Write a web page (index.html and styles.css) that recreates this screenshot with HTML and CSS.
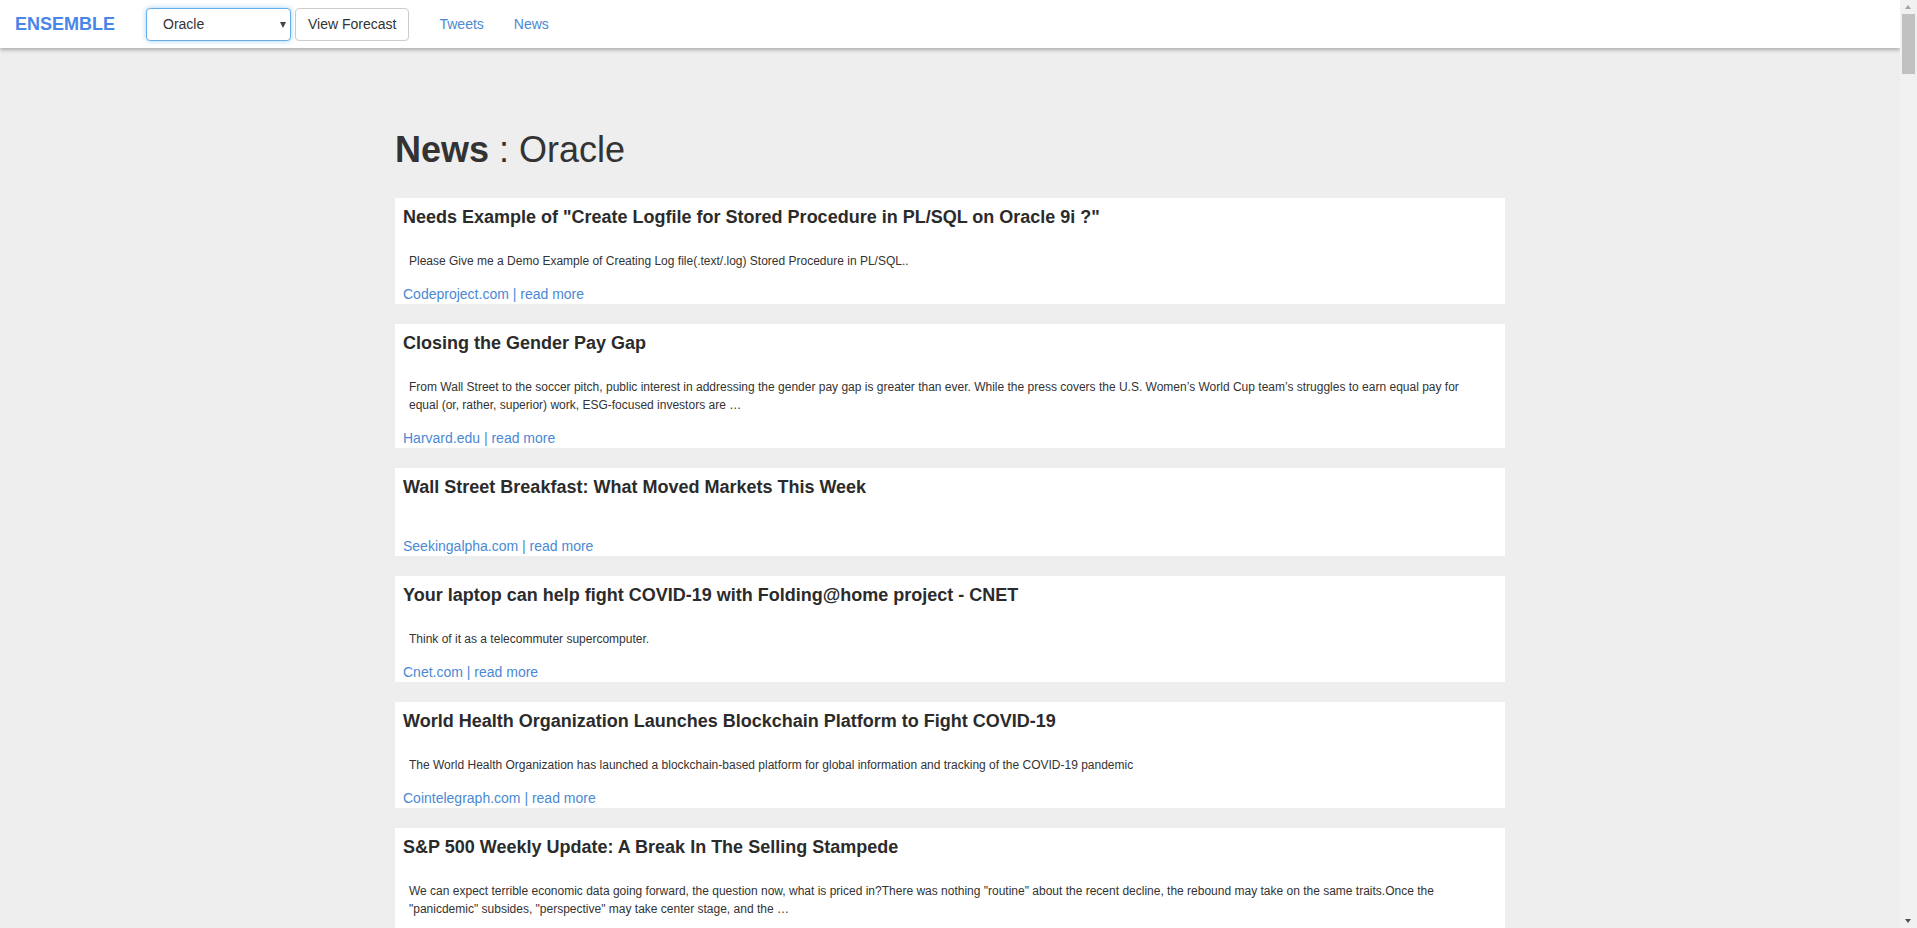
FILE: index.html
```html
<!DOCTYPE html>
<html lang="en">
<head>
<meta charset="utf-8">
<title>Ensemble - News</title>
<link rel="stylesheet" href="styles.css">
</head>
<body>
<div class="page">
  <nav class="navbar">
    <a class="brand" href="#">ENSEMBLE</a>
    <div class="picker">
      <span class="select-wrap">
        <select class="select">
          <option>Oracle</option>
          <option>Apple</option>
          <option>Google</option>
        </select>
      </span>
      <button class="btn">View Forecast</button>
    </div>
    <ul class="nav-links">
      <li><a href="#">Tweets</a></li>
      <li><a href="#">News</a></li>
    </ul>
  </nav>

  <main class="container">
    <h1 class="page-title"><b>News</b> : Oracle</h1>

    <article class="card">
      <h4 class="card-title">Needs Example of "Create Logfile for Stored Procedure in PL/SQL on Oracle 9i ?"</h4>
      <p class="card-desc">Please Give me a Demo Example of Creating Log file(.text/.log) Stored Procedure in PL/SQL..</p>
      <div class="card-link"><a href="#">Codeproject.com | read more</a></div>
    </article>

    <article class="card">
      <h4 class="card-title">Closing the Gender Pay Gap</h4>
      <p class="card-desc">From Wall Street to the soccer pitch, public interest in addressing the gender pay gap is greater than ever. While the press covers the U.S. Women’s World Cup team’s struggles to earn equal pay for equal (or, rather, superior) work, ESG-focused investors are …</p>
      <div class="card-link"><a href="#">Harvard.edu | read more</a></div>
    </article>

    <article class="card">
      <h4 class="card-title">Wall Street Breakfast: What Moved Markets This Week</h4>
      <p class="card-desc"></p>
      <div class="card-link"><a href="#">Seekingalpha.com | read more</a></div>
    </article>

    <article class="card">
      <h4 class="card-title">Your laptop can help fight COVID-19 with Folding@home project - CNET</h4>
      <p class="card-desc">Think of it as a telecommuter supercomputer.</p>
      <div class="card-link"><a href="#">Cnet.com | read more</a></div>
    </article>

    <article class="card">
      <h4 class="card-title">World Health Organization Launches Blockchain Platform to Fight COVID-19</h4>
      <p class="card-desc">The World Health Organization has launched a blockchain-based platform for global information and tracking of the COVID-19 pandemic</p>
      <div class="card-link"><a href="#">Cointelegraph.com | read more</a></div>
    </article>

    <article class="card">
      <h4 class="card-title">S&amp;P 500 Weekly Update: A Break In The Selling Stampede</h4>
      <p class="card-desc">We can expect terrible economic data going forward, the question now, what is priced in?There was nothing "routine" about the recent decline, the rebound may take on the same traits.Once the "panicdemic" subsides, "perspective" may take center stage, and the …</p>
      <div class="card-link"><a href="#">Seekingalpha.com | read more</a></div>
    </article>
  </main>
</div>

<div class="scrollbar" aria-hidden="true">
  <span class="sb-up"></span>
  <span class="sb-thumb"></span>
  <span class="sb-down"></span>
</div>
</body>
</html>
```

FILE: styles.css
```css
* { box-sizing: border-box; }

html, body {
  margin: 0;
  padding: 0;
}

body {
  background: #eeeeee;
  font-family: "Liberation Sans", Arial, Helvetica, sans-serif;
  font-size: 14px;
  color: #333333;
}

.page {
  margin-right: 17px;
}

a {
  color: #4a89d4;
  text-decoration: none;
}

/* ---------- fake browser scrollbar ---------- */
.scrollbar {
  position: fixed;
  top: 0;
  right: 0;
  width: 17px;
  height: 100vh;
  background: #f1f1f1;
  z-index: 10;
}

.sb-up {
  position: absolute;
  top: 5px;
  left: 5px;
  border-left: 3.5px solid transparent;
  border-right: 3.5px solid transparent;
  border-bottom: 4px solid #a3a3a3;
}

.sb-thumb {
  position: absolute;
  top: 14px;
  left: 2px;
  width: 13px;
  height: 60px;
  background: #c1c1c1;
}

.sb-down {
  position: absolute;
  bottom: 5px;
  left: 5px;
  border-left: 3.5px solid transparent;
  border-right: 3.5px solid transparent;
  border-top: 4px solid #505050;
}

/* ---------- navbar ---------- */
.navbar {
  display: flex;
  align-items: center;
  height: 48px;
  background: #ffffff;
  box-shadow: 0 2px 4px rgba(0, 0, 0, 0.28);
  padding: 0 15px;
  position: relative;
  z-index: 2;
}

.brand {
  font-size: 18px;
  font-weight: bold;
  color: #4a86e8;
  line-height: 20px;
  margin-right: 31px;
}

.picker {
  display: flex;
  align-items: center;
  gap: 4px;
}

.select-wrap {
  position: relative;
  display: inline-block;
}

.select-wrap::after {
  content: "";
  position: absolute;
  right: 5px;
  top: 14px;
  border-left: 3.5px solid transparent;
  border-right: 3.5px solid transparent;
  border-top: 6px solid #444444;
  pointer-events: none;
}

.select {
  -webkit-appearance: none;
  appearance: none;
  width: 145px;
  height: 33px;
  padding: 0 16px;
  font-family: "Liberation Sans", Arial, sans-serif;
  font-size: 14px;
  color: #333333;
  background: #ffffff;
  border: 1px solid #66afe9;
  border-radius: 4px;
  box-shadow: 0 0 5px rgba(102, 175, 233, 0.6);
  outline: none;
}

.btn {
  height: 33px;
  padding: 0 12px;
  font-family: "Liberation Sans", Arial, sans-serif;
  font-size: 14px;
  color: #333333;
  background: #ffffff;
  border: 1px solid #cccccc;
  border-radius: 4px;
}

.nav-links {
  display: flex;
  list-style: none;
  margin: 0 0 0 15px;
  padding: 0;
}

.nav-links a {
  display: block;
  padding: 0 15px;
  line-height: 20px;
  color: #4a89d4;
}

/* ---------- content ---------- */
.container {
  width: 1110px;
  margin: 0 auto;
  padding: 80px 0 40px;
}

.page-title {
  margin: 0 0 27px;
  font-size: 36px;
  line-height: 43px;
  font-weight: normal;
  color: #333333;
}

.page-title b {
  font-weight: bold;
}

.card {
  display: flex;
  flex-direction: column;
  background: #ffffff;
  padding: 0 8px;
  margin-bottom: 20px;
}

.card-title {
  margin: 9px 0 0;
  font-size: 18px;
  line-height: 20px;
  font-weight: bold;
  color: #2b2b2b;
}

.card-desc {
  margin: 25px 0 14px;
  padding: 0 30px 0 6px;
  font-size: 12px;
  line-height: 18px;
  color: #333333;
}

.card-link {
  font-size: 14px;
  line-height: 20px;
}
```
